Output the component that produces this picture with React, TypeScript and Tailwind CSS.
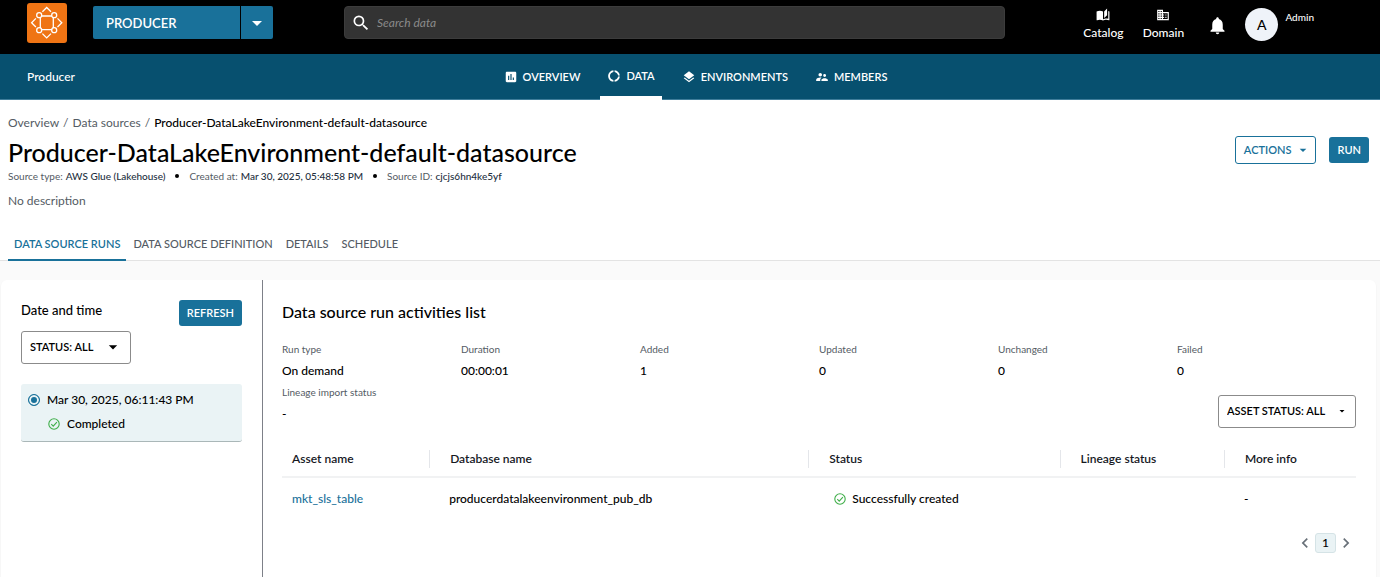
import React from 'react';
import { clsx } from 'clsx';
import {
  MdArrowDropDown,
  MdAssessment,
  MdAutoStories,
  MdChevronLeft,
  MdChevronRight,
  MdDomain,
  MdDonutLarge,
  MdLayers,
  MdNotifications,
  MdSearch,
  MdSupervisorAccount,
} from 'react-icons/md';

const navItems = [
  { label: 'OVERVIEW', icon: MdAssessment },
  { label: 'DATA', icon: MdDonutLarge, active: true },
  { label: 'ENVIRONMENTS', icon: MdLayers },
  { label: 'MEMBERS', icon: MdSupervisorAccount },
];

const tabs = ['DATA SOURCE RUNS', 'DATA SOURCE DEFINITION', 'DETAILS', 'SCHEDULE'];

const stats = [
  { label: 'Run type', value: 'On demand' },
  { label: 'Duration', value: '00:00:01' },
  { label: 'Added', value: '1' },
  { label: 'Updated', value: '0' },
  { label: 'Unchanged', value: '0' },
  { label: 'Failed', value: '0' },
  { label: 'Lineage import status', value: '-' },
];

const columns = [
  { label: 'Asset name', width: 'w-[13.7%]' },
  { label: 'Database name', width: 'w-[35.3%]' },
  { label: 'Status', width: 'w-[23.4%]' },
  { label: 'Lineage status', width: 'w-[15.3%]' },
  { label: 'More info', width: 'w-[12.3%]' },
];

function Logo() {
  return (
    <svg viewBox="0 0 40 40" className="size-10 shrink-0" fill="none" stroke="white" strokeWidth="1.3">
      <rect width="40" height="40" rx="3" fill="#ef7414" stroke="none" />
      <path d="M14.6 13h10.2M14.6 26.6h10.2M13.3 14.5v10.5M26.3 14.5v10.5" />
      <circle cx="12.2" cy="12.2" r="2.5" />
      <circle cx="27.2" cy="12.2" r="2.5" />
      <circle cx="12.2" cy="27.2" r="2.5" />
      <circle cx="27.2" cy="27.2" r="2.5" />
      <path d="M15.4 8.8 19.7 4.5l4.3 4.3M15.4 30.6l4.3 4.3 4.3-4.3M8.9 15.4 4.6 19.7l4.3 4.3M30.5 15.4l4.3 4.3-4.3 4.3" />
    </svg>
  );
}

function CheckCircle() {
  return (
    <svg viewBox="0 0 12 12" className="size-3 shrink-0" fill="none" stroke="#3fae49" strokeWidth="1.1">
      <circle cx="6" cy="6" r="5.2" />
      <path d="M3.3 6.2l1.9 1.9 3.7-4" />
    </svg>
  );
}

function Header() {
  return (
    <header className="flex h-[54px] items-start bg-black pt-[3px] pr-[66px] pl-[27px] text-white">
      <a href="#" aria-label="Home">
        <Logo />
      </a>
      <div className="mt-[3px] ml-[26px] flex h-[33px] gap-px">
        <button className="w-[147px] rounded-l-xs bg-[#19719a] pt-[2px] pl-[13px] text-left text-[13px] font-semibold">
          PRODUCER
        </button>
        <button
          aria-label="Switch project"
          className="flex w-8 items-center justify-center rounded-r-xs bg-[#19719a]"
        >
          <MdArrowDropDown className="size-6" />
        </button>
      </div>
      <label className="mt-[3px] ml-[71px] flex h-[33px] flex-1 items-center gap-[6px] rounded-sm border border-[#3c3c3c] bg-[#333] px-[6px]">
        <MdSearch className="size-5" />
        <input
          type="search"
          aria-label="Search data"
          placeholder="Search data"
          className="flex-1 bg-transparent text-xs outline-none placeholder:text-[#8a8a8a] placeholder:italic"
        />
      </label>
      <div className="ml-[78px] flex items-start text-xs font-medium">
        <a href="#" className="flex w-10 flex-col items-center gap-[3px] pt-[5px]">
          <MdAutoStories className="size-[14px]" />
          Catalog
        </a>
        <a href="#" className="ml-5 flex w-10 flex-col items-center gap-[3px] pt-[5px]">
          <MdDomain className="size-[14px]" />
          Domain
        </a>
        <button aria-label="Notifications" className="mt-3 ml-6">
          <MdNotifications className="size-[21px]" />
        </button>
        <span className="mt-[5px] ml-[17px] flex size-[33px] items-center justify-center rounded-full bg-[#eff3f9] text-sm text-black">
          A
        </span>
        <span className="mt-2 ml-[7px] text-[10px]">Admin</span>
      </div>
    </header>
  );
}

function ProjectNav() {
  return (
    <nav className="flex h-[46px] items-stretch border-b border-[#3f7d9a] bg-[#07506f] pr-4 pl-[27px] text-[11px] font-semibold text-white">
      <a href="#" className="flex flex-1 items-center text-xs font-medium">
        Producer
      </a>
      <div className="-mb-px flex gap-[13px]">
        {navItems.map(({ label, icon: Icon, active }) => (
          <a
            key={label}
            href="#"
            className={clsx('flex items-center gap-[5px] px-[7px]', active && 'border-b-4 border-white pt-[2px]')}
          >
            <Icon className="size-[14px]" />
            {label}
          </a>
        ))}
      </div>
      <div className="flex-1" />
    </nav>
  );
}

function PageHeading() {
  return (
    <section className="px-2 pt-[14px]">
      <nav aria-label="Breadcrumb" className="flex gap-1 text-xs leading-[18px] text-[#545b64]">
        <a href="#">Overview</a>
        <span>/</span>
        <a href="#">Data sources</a>
        <span>/</span>
        <span className="font-medium text-black">Producer-DataLakeEnvironment-default-datasource</span>
      </nav>
      <div className="flex items-start justify-between pr-[3px]">
        <div>
          <h1 className="pt-1 text-[25px] leading-8 font-medium">Producer-DataLakeEnvironment-default-datasource</h1>
          <p className="flex items-center text-[10px] leading-4 font-medium text-[#232f3e]">
            <span className="font-normal text-[#545b64]">Source type:</span>
            <span className="ml-[3px]">AWS Glue (Lakehouse)</span>
            <span className="mx-[10px] size-1 rounded-full bg-black" />
            <span className="font-normal text-[#545b64]">Created at:</span>
            <span className="ml-[3px]">Mar 30, 2025, 05:48:58 PM</span>
            <span className="mx-[10px] size-1 rounded-full bg-black" />
            <span className="font-normal text-[#545b64]">Source ID:</span>
            <span className="ml-[3px]">cjcjs6hn4ke5yf</span>
          </p>
        </div>
        <div className="mt-1 flex gap-[13px] text-[11px] font-semibold">
          <button className="flex h-7 items-center gap-1 rounded-[3px] border border-[#19719a] pr-1 pl-2 text-[#19719a]">
            ACTIONS
            <MdArrowDropDown className="size-4" />
          </button>
          <button className="h-[26px] self-center rounded-[3px] bg-[#19719a] px-2 text-white">RUN</button>
        </div>
      </div>
      <p className="mt-2 text-xs leading-[18px] text-[#545b64]">No description</p>
    </section>
  );
}

function Tabs() {
  return (
    <div role="tablist" className="mt-[17px] flex gap-px border-b border-[#e3e3e3] px-2 text-[11px] font-medium">
      {tabs.map((tab, i) => (
        <button
          key={tab}
          role="tab"
          aria-selected={i === 0}
          className={clsx(
            '-mb-px h-[34px] border-b-2 px-[6px] pt-[2px]',
            i === 0 ? 'border-[#19719a] font-semibold text-[#19719a]' : 'border-transparent text-[#545b64]'
          )}
        >
          {tab}
        </button>
      ))}
    </div>
  );
}

function RunsSidebar() {
  return (
    <aside className="w-[262px] shrink-0 border-r border-[#7d8088] px-5 pt-5">
      <div className="flex items-start justify-between">
        <h2 className="text-[13px] leading-5 font-medium">Date and time</h2>
        <button className="h-[26px] rounded-[3px] bg-[#19719a] px-2 text-[11px] font-semibold text-white">REFRESH</button>
      </div>
      <div className="relative mt-[5px] w-[110px]">
        <select
          aria-label="Run status"
          className="h-[33px] w-full appearance-none rounded-[3px] border border-[#8b8b8b] bg-white pl-2 text-[11px] font-semibold"
        >
          <option>STATUS: ALL</option>
        </select>
        <MdArrowDropDown className="pointer-events-none absolute top-[6px] right-2 size-5" />
      </div>
      <label className="mt-5 block rounded-[3px] border-b border-[#aab7b8] bg-[#eaf3f5] px-[7px] pt-[6px] pb-[7px] text-xs font-medium">
        <span className="flex h-5 items-center gap-[7px]">
          <input
            type="radio"
            name="run"
            defaultChecked
            className="size-3 appearance-none rounded-full border border-[#19719a] bg-[#19719a] checked:shadow-[inset_0_0_0_2px_#eaf3f5]"
          />
          Mar 30, 2025, 06:11:43 PM
        </span>
        <span className="mt-1 flex h-5 items-center gap-[7px] pl-5">
          <CheckCircle />
          Completed
        </span>
      </label>
    </aside>
  );
}

function AssetTable() {
  return (
    <table className="mt-[22px] w-full table-fixed text-left text-xs">
      <thead>
        <tr className="border-b-2 border-[#f1f2f3]">
          {columns.map((column, i) => (
            <th key={column.label} className={clsx('pb-2 font-semibold text-[#16191f]', column.width)}>
              <span className={clsx('block leading-[18px]', i === 0 ? 'pl-[10px]' : 'border-l border-[#e4e6ea] pl-5')}>
                {column.label}
              </span>
            </th>
          ))}
        </tr>
      </thead>
      <tbody>
        <tr className="h-[43px] font-medium">
          <td className="pl-[10px]">
            <a href="#" className="text-[#19719a]">
              mkt_sls_table
            </a>
          </td>
          <td className="pl-5">producerdatalakeenvironment_pub_db</td>
          <td className="pl-[26px]">
            <span className="flex items-center gap-[6px]">
              <CheckCircle />
              Successfully created
            </span>
          </td>
          <td />
          <td className="pl-5">-</td>
        </tr>
      </tbody>
    </table>
  );
}

function RunActivities() {
  return (
    <section className="flex-1 pt-5 pr-5 pl-[19px]">
      <h2 className="text-base leading-6 font-medium">Data source run activities list</h2>
      <dl className="mt-4 grid grid-cols-6">
        {stats.map((stat) => (
          <div key={stat.label} className="h-[43px]">
            <dt className="text-[10px] leading-[18px] text-[#545b64]">{stat.label}</dt>
            <dd className="mt-1 text-xs leading-[18px] font-medium">{stat.value}</dd>
          </div>
        ))}
      </dl>
      <div className="-mt-[31px] flex justify-end">
        <div className="relative w-[138px]">
          <select
            aria-label="Asset status"
            className="h-[33px] w-full appearance-none rounded-[3px] border border-[#8b8b8b] bg-white pl-2 text-[11px] font-semibold"
          >
            <option>ASSET STATUS: ALL</option>
          </select>
          <MdArrowDropDown className="pointer-events-none absolute top-[10px] right-2 size-3" />
        </div>
      </div>
      <AssetTable />
      <div className="mt-[13px] flex items-center justify-end text-xs font-medium">
        <button aria-label="Previous page" className="text-[#687078]">
          <MdChevronLeft className="size-5" />
        </button>
        <button className="h-5 w-[21px] rounded-[3px] border border-[#d5e3e6] bg-[#eaf3f5]">1</button>
        <button aria-label="Next page" className="text-[#687078]">
          <MdChevronRight className="size-5" />
        </button>
      </div>
    </section>
  );
}

export default function App() {
  return (
    <div className="flex min-h-screen flex-col bg-white font-['Lato',sans-serif] text-black">
      <Header />
      <ProjectNav />
      <PageHeading />
      <Tabs />
      <main className="flex flex-1 bg-[#fafafa] pt-[19px] pr-1 pl-px">
        <div className="flex flex-1 rounded-t-md bg-white shadow-xs">
          <RunsSidebar />
          <RunActivities />
        </div>
      </main>
    </div>
  );
}
